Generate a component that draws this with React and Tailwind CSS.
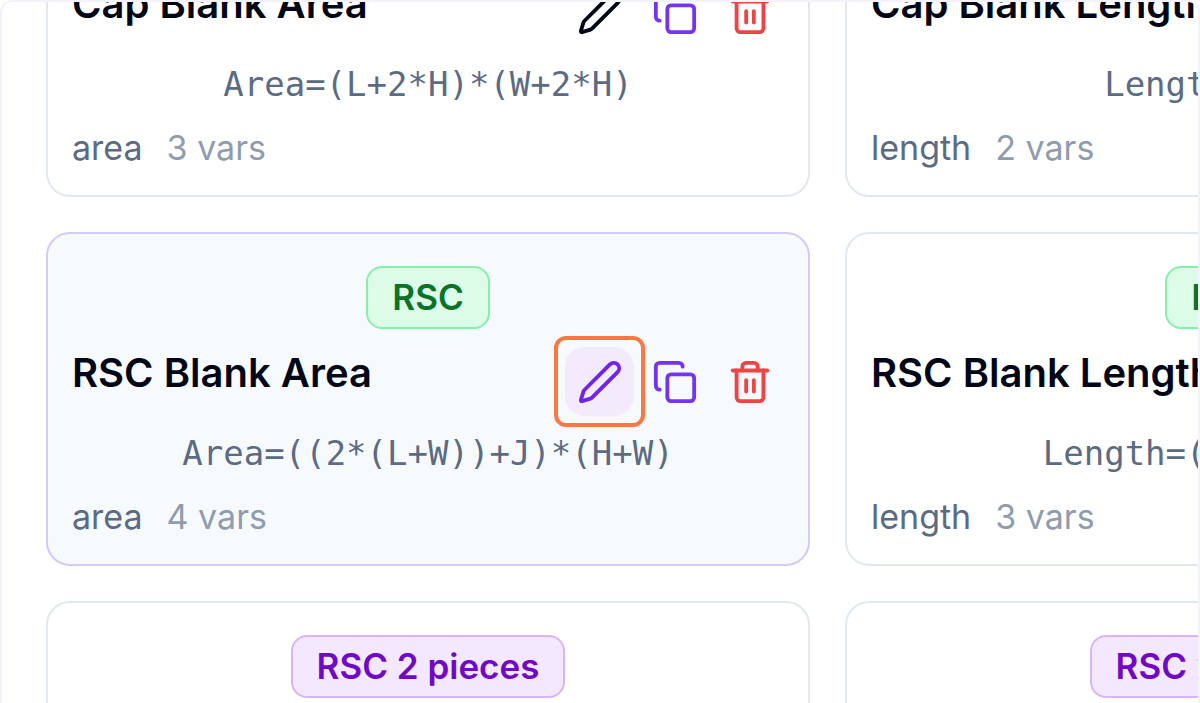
import React from "react";
import { Copy, Pen, Trash2 } from "lucide-react";

const formulas = [
  { badge: "Cap", name: "Cap Blank Area", formula: "Area=(L+2*H)*(W+2*H)", type: "area", vars: 3 },
  { badge: "Cap", name: "Cap Blank Length", formula: "Length=L+2*H", type: "length", vars: 2 },
  { badge: "RSC", name: "RSC Blank Area", formula: "Area=((2*(L+W))+J)*(H+W)", type: "area", vars: 4, active: true },
  { badge: "RSC", name: "RSC Blank Length", formula: "Length=(2*(L+W))+J", type: "length", vars: 3 },
  { badge: "RSC 2 pieces", name: "RSC 2 pieces Area", formula: "Area=((L+W)+J)*(H+W)", type: "area", vars: 4 },
  { badge: "RSC 2 pieces", name: "RSC 2 pieces Length", formula: "Length=(L+W)+J", type: "length", vars: 3 },
];

const badgeColors = {
  Cap: "bg-blue-100 border-blue-300 text-blue-700",
  RSC: "bg-[#dcfce7] border-[#86efac] text-[#087329]",
  "RSC 2 pieces": "bg-[#f3e8ff] border-[#d8b4fe] text-[#7008c8]",
};

function IconButton({ label, className, children }) {
  return (
    <button
      aria-label={label}
      className={`relative flex size-[69px] items-center justify-center rounded-[20px] ${className}`}
    >
      {children}
    </button>
  );
}

function FormulaCard({ item }) {
  return (
    <article
      className={`rounded-3xl border-2 px-6 pt-8 pb-[26px] ${
        item.active ? "border-[#d6c8fa] bg-[#f7fafd]" : "border-[#e2e8f0] bg-white"
      }`}
    >
      <div className="flex justify-center">
        <span
          className={`rounded-2xl border-2 px-6 py-2 text-[35px] leading-[43px] font-semibold whitespace-nowrap ${badgeColors[item.badge]}`}
        >
          {item.badge}
        </span>
      </div>

      <div className="mt-[18px] flex items-start justify-between">
        <h3 className="text-[40px] leading-[52px] font-semibold whitespace-nowrap text-[#020617]">
          {item.name}
        </h3>
        <div className="flex gap-[6px]">
          <IconButton
            label="Edit"
            className={item.active ? "bg-[#f3ebfc] text-[#7022f0]" : "text-[#020617]"}
          >
            <Pen size={46} />
            {/* focus ring around the edit action */}
            {item.active && (
              <span className="pointer-events-none absolute -inset-[11px] rounded-xl border-4 border-[#ff7640]" />
            )}
          </IconButton>
          <IconButton label="Duplicate" className="text-[#7434f0]">
            <Copy size={46} />
          </IconButton>
          <IconButton label="Delete" className="text-[#f04444]">
            <Trash2 size={46} />
          </IconButton>
        </div>
      </div>

      <p className="mt-4 text-center font-['DejaVu_Sans_Mono',monospace] text-[34px] leading-[42px] whitespace-nowrap text-[#5b6b84]">
        {item.formula}
      </p>

      <div className="mt-[22px] flex gap-6 text-[34px] leading-[42px]">
        <span className="text-[#5b6b84]">{item.type}</span>
        <span className="text-[#8f9cb0]">{item.vars} vars</span>
      </div>
    </article>
  );
}

export default function App() {
  return (
    <main className="h-screen overflow-hidden rounded-t-xl border-2 border-b-0 border-[#f4f2fa] bg-white font-['Inter',sans-serif]">
      <div className="-mt-[139px] ml-11 grid grid-cols-[repeat(2,764px)] gap-[35px]">
        {formulas.map((item) => (
          <FormulaCard key={item.name} item={item} />
        ))}
      </div>
    </main>
  );
}
